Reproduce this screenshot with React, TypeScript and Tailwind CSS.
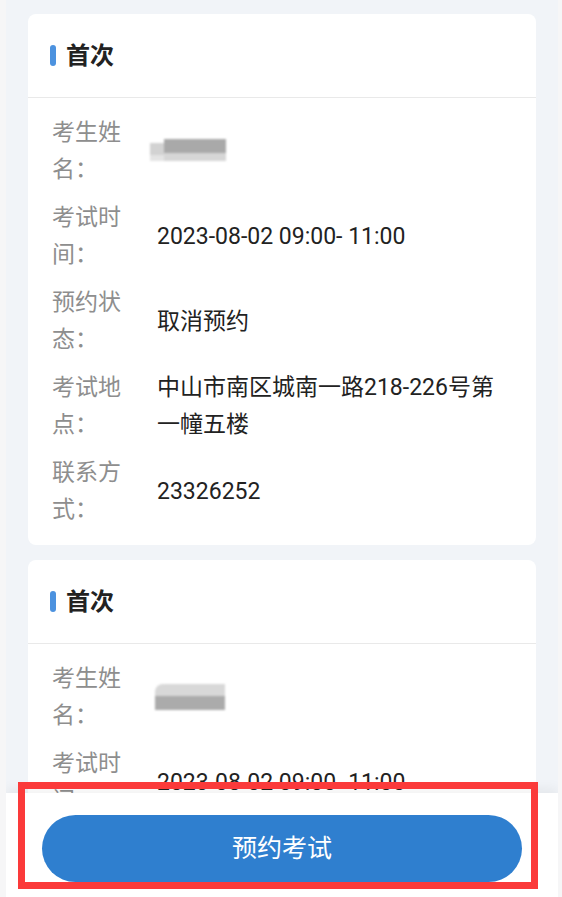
import React from "react";

const font = { fontFamily: "Roboto, 'Noto Sans CJK SC', sans-serif" };

function Blur({ variant }: { variant: 1 | 2 }) {
  if (variant === 1) {
    return (
      <div className="flex w-[76px] h-[24px] blur-[1px] -ml-[7px]">
        <div className="w-[14px] h-full flex flex-col pt-[4px]">
          <div className="h-[12px] bg-[#d2d2d2]" />
          <div className="h-[6px] bg-[#e4e4e4]" />
        </div>
        <div className="flex-1 flex flex-col">
          <div className="h-[14px] bg-[#a9a9a9]" />
          <div className="h-[8px] bg-[#d6d6d6]" />
        </div>
      </div>
    );
  }
  return (
    <div className="flex w-[70px] h-[26px] blur-[1px] -ml-[2px]">
      <div className="flex-1 flex flex-col">
        <div className="h-[12px] bg-[#d8d8d8] rounded-tl-[8px]" />
        <div className="h-[14px] bg-[#ababab]" />
      </div>
    </div>
  );
}

function Row({ label, children }: { label: string; children: React.ReactNode }) {
  return (
    <div className="flex items-center">
      <div className="w-[70px] text-[23px] leading-[37px] text-[#8e8e8e]">{label}</div>
      <div className="ml-[35px] flex-1 text-[23px] leading-[37px] text-[#222]">{children}</div>
    </div>
  );
}

function Card({ variant, full }: { variant: 1 | 2; full: boolean }) {
  return (
    <div className="bg-white rounded-[8px]">
      <div className="h-[84px] flex items-center pl-[22px] border-b border-[#e9e9e9]">
        <div className="w-[6px] h-[21px] rounded-full bg-[#4c92df]" />
        <div className="ml-[10px] text-[24px] font-bold text-[#222]">首次</div>
      </div>
      <div className="pl-[24px] pr-[24px] pt-[16px] pb-[17px] flex flex-col gap-[11px]">
        <Row label="考生姓名：">
          <Blur variant={variant} />
        </Row>
        <Row label="考试时间：">2023-08-02 09:00- 11:00</Row>
        {full && (
          <>
            <Row label="预约状态：">取消预约</Row>
            <Row label="考试地点：">中山市南区城南一路218-226号第一幢五楼</Row>
            <Row label="联系方式：">23326252</Row>
          </>
        )}
      </div>
    </div>
  );
}

export default function App() {
  return (
    <div className="w-[562px] h-[897px] overflow-hidden bg-[#f6f6f7] pl-[6px] pr-[4px] relative" style={font}>
      <div className="h-full bg-[#f1f4f8] px-[22px] pt-[14px] flex flex-col gap-[15px] relative overflow-hidden">
        <Card variant={1} full />
        <Card variant={2} full />
        <div className="absolute left-0 right-0 bottom-0 h-[104px] bg-white shadow-[0_-4px_12px_rgba(0,0,0,0.06)] px-[36px] pt-[22px]">
          <button className="w-full h-[67px] rounded-full bg-[#2f7fcf] text-white text-[25px]">预约考试</button>
        </div>
      </div>
      <div className="absolute left-[18px] top-[782px] w-[520px] h-[107px] border-[7px] border-[#fb3a3a]" />
    </div>
  );
}
